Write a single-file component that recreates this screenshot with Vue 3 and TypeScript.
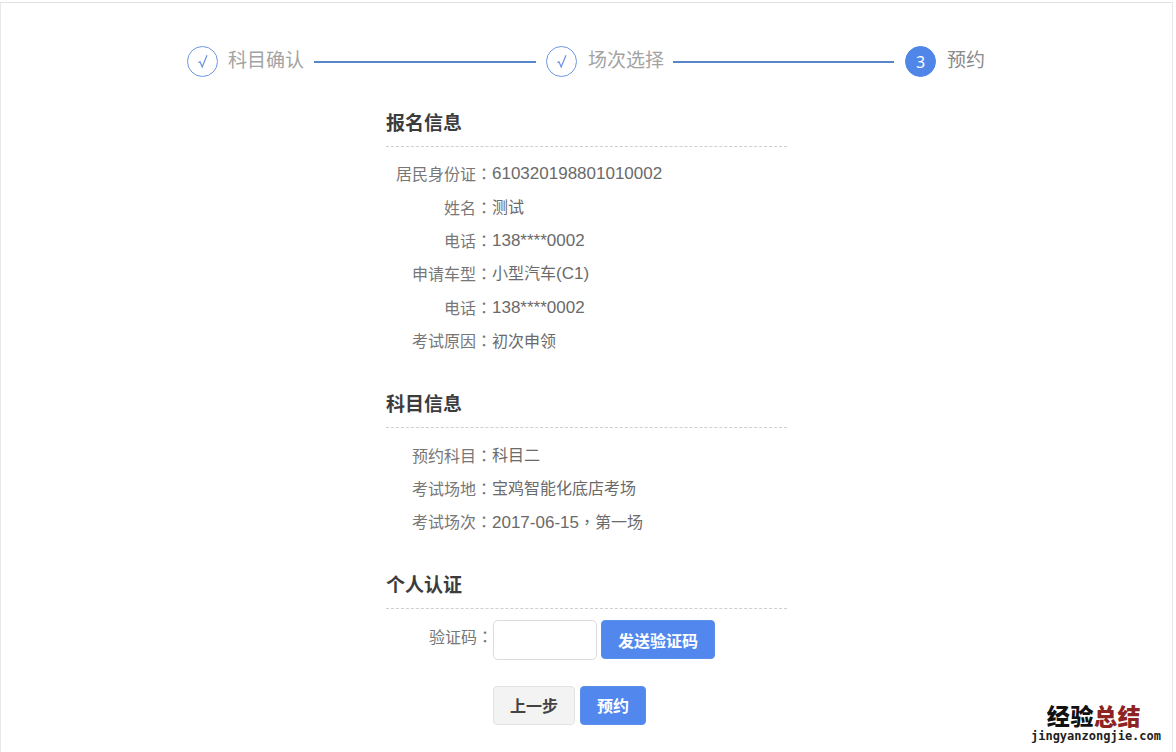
<script setup lang="ts">
interface Row { label: string; value: string }
interface Step { text: string; mark: 'check' | 'num'; active?: boolean }
interface Run { text: string; cls: string }

const steps: Step[] = [
  { text: '科目确认', mark: 'check' },
  { text: '场次选择', mark: 'check' },
  { text: '预约', mark: 'num', active: true },
]
const applyRows: Row[] = [
  { label: '居民身份证', value: '610320198801010002' },
  { label: '姓名', value: '测试' },
  { label: '电话', value: '138****0002' },
  { label: '申请车型', value: '小型汽车(C1)' },
  { label: '电话', value: '138****0002' },
  { label: '考试原因', value: '初次申领' },
]
const subjectRows: Row[] = [
  { label: '预约科目', value: '科目二' },
  { label: '考试场地', value: '宝鸡智能化底店考场' },
  { label: '考试场次', value: '2017-06-15，第一场' },
]

function runs(value: string): Run[] {
  const parts = value.match(/[\x20-\x7e]+|，|[^\x20-\x7e，]+/g) ?? []
  return parts.map((text) => ({
    text,
    cls: /^[\x20-\x7e]/.test(text) ? 'latin' : text === '，' ? 'tc' : '',
  }))
}
</script>

<template>
  <div class="panel">
    <ol class="stepper">
      <template v-for="(s, i) in steps" :key="s.text">
        <li class="step" :class="{ active: s.active }">
          <span class="dot">
            <svg v-if="s.mark === 'check'" width="12" height="15" viewBox="0 0 12 15">
              <path d="M1.4 8.6 L3 7.8 L5.2 13 L10 1.2" fill="none" stroke="#6b8fe0" stroke-width="1.2" />
            </svg>
            <template v-else>3</template>
          </span>
          <span class="step-text">{{ s.text }}</span>
        </li>
        <li v-if="i < steps.length - 1" class="bar" aria-hidden="true"></li>
      </template>
    </ol>

    <main class="form">
      <section class="block">
        <h2>报名信息</h2>
        <div class="rows">
          <div v-for="(r, i) in applyRows" :key="i" class="row">
            <span class="label">{{ r.label }}<span class="tc">：</span></span>
            <span class="value"><span v-for="(p, j) in runs(r.value)" :key="j" :class="p.cls">{{ p.text }}</span></span>
          </div>
        </div>
      </section>

      <section class="block">
        <h2>科目信息</h2>
        <div class="rows">
          <div v-for="(r, i) in subjectRows" :key="i" class="row">
            <span class="label">{{ r.label }}<span class="tc">：</span></span>
            <span class="value"><span v-for="(p, j) in runs(r.value)" :key="j" :class="p.cls">{{ p.text }}</span></span>
          </div>
        </div>
      </section>

      <section class="block auth">
        <h2>个人认证</h2>
        <div class="code-row">
          <label class="label" for="code">验证码<span class="tc">：</span></label>
          <input id="code" class="code" type="text" />
          <button class="btn primary send" type="button">发送验证码</button>
        </div>
        <div class="actions">
          <button class="btn ghost" type="button">上一步</button>
          <button class="btn primary submit" type="button">预约</button>
        </div>
      </section>
    </main>

    <div class="watermark">
      <div class="wm-cn">经验<em>总结</em></div>
      <div class="wm-en">jingyanzongjie.com</div>
    </div>
  </div>
</template>

<style>
html, body { margin: 0; overflow: hidden; background: #fff; }
</style>

<style scoped>
.panel {
  position: relative;
  box-sizing: border-box;
  width: 1173px;
  height: 750px;
  margin-top: 2px;
  border: 1px solid #e8e8e8;
  border-bottom: none;
  border-top-color: #e2e2e2;
  overflow: hidden;
  background: #fff;
  font-family: "Noto Sans", "Noto Sans CJK SC", sans-serif;
  color: #666;
}
.stepper {
  list-style: none;
  margin: 43px 0 0;
  padding: 0 0 0 186px;
  display: flex;
  align-items: center;
}
.step {
  display: flex;
  align-items: center;
  gap: 11px;
}
.step:first-child { gap: 10px; }
.dot {
  box-sizing: border-box;
  width: 31px;
  height: 31px;
  border: 1px solid #6f97e2;
  border-radius: 50%;
  display: flex;
  align-items: center;
  justify-content: center;
  font-size: 16px;
  color: #fff;
}
.step.active .dot { background: #4f86e8; border-color: #4f86e8; }
.step-text { font-size: 19px; line-height: 26px; color: #a3a3a3; margin-top: -3px; }
.step.active .step-text { color: #8b8b8b; }
.bar {
  width: 222px;
  height: 2px;
  margin: 0 10px;
  background: #5686c8;
}
.bar:nth-child(4) { width: 221px; margin: 0 11px 0 9px; }
.form {
  width: 401px;
  margin: 29px auto 0;
}
.block + .block { margin-top: 30px; }
.block.auth { margin-top: 29px; }
h2 {
  margin: 0;
  padding: 2px 0 8px;
  font-size: 19px;
  line-height: 30px;
  font-weight: 700;
  color: #3c3c3c;
  border-bottom: 1px dashed #cfcfcf;
}
.rows { padding-top: 10px; }
.row {
  height: 33.4px;
  display: flex;
  align-items: center;
  line-height: 22px;
}
.label {
  flex: none;
  width: 106px;
  text-align: right;
  font-size: 16px;
  line-height: 22px;
  color: #777;
}
.tc { font-family: "Noto Sans CJK TC", sans-serif; }
.value { font-size: 16px; color: #6a6a6a; }
.latin { font-family: "Liberation Sans", sans-serif; font-size: 17px; }
.code-row {
  margin-top: 11px;
  display: flex;
  align-items: center;
}
.code-row .label { width: 107px; margin-top: -6px; }
.code {
  box-sizing: border-box;
  width: 104px;
  height: 40px;
  border: 1px solid #dcdcdc;
  border-radius: 5px;
  background: #fff;
  outline: none;
}
.btn {
  box-sizing: border-box;
  height: 39px;
  border-radius: 4px;
  font-family: inherit;
  font-size: 16px;
  font-weight: 700;
  padding: 0;
  cursor: pointer;
}
.primary { border: 1px solid #5a8fec; background: #5288ee; color: #fff; }
.ghost { border: 1px solid #e3e3e3; background: #f3f3f3; color: #444; width: 82px; }
.send { width: 114px; margin-left: 4px; }
.submit { width: 66px; margin-left: 5px; }
.actions {
  margin-top: 26px;
  padding-left: 107px;
  display: flex;
}
.watermark {
  position: absolute;
  left: 1029px;
  top: 699px;
  width: 132px;
  text-align: center;
  color: #111;
}
.wm-cn {
  padding-right: 4px;
  font-size: 23px;
  line-height: 27px;
  font-weight: 900;
  letter-spacing: 0.6px;
  font-family: "Noto Sans CJK SC", sans-serif;
}
.wm-cn em { font-style: normal; color: #8e2323; }
.wm-en {
  font-family: "DejaVu Sans Mono", monospace;
  font-size: 12px;
  line-height: 14px;
  font-weight: 700;
  color: #222;
  white-space: nowrap;
}
</style>
